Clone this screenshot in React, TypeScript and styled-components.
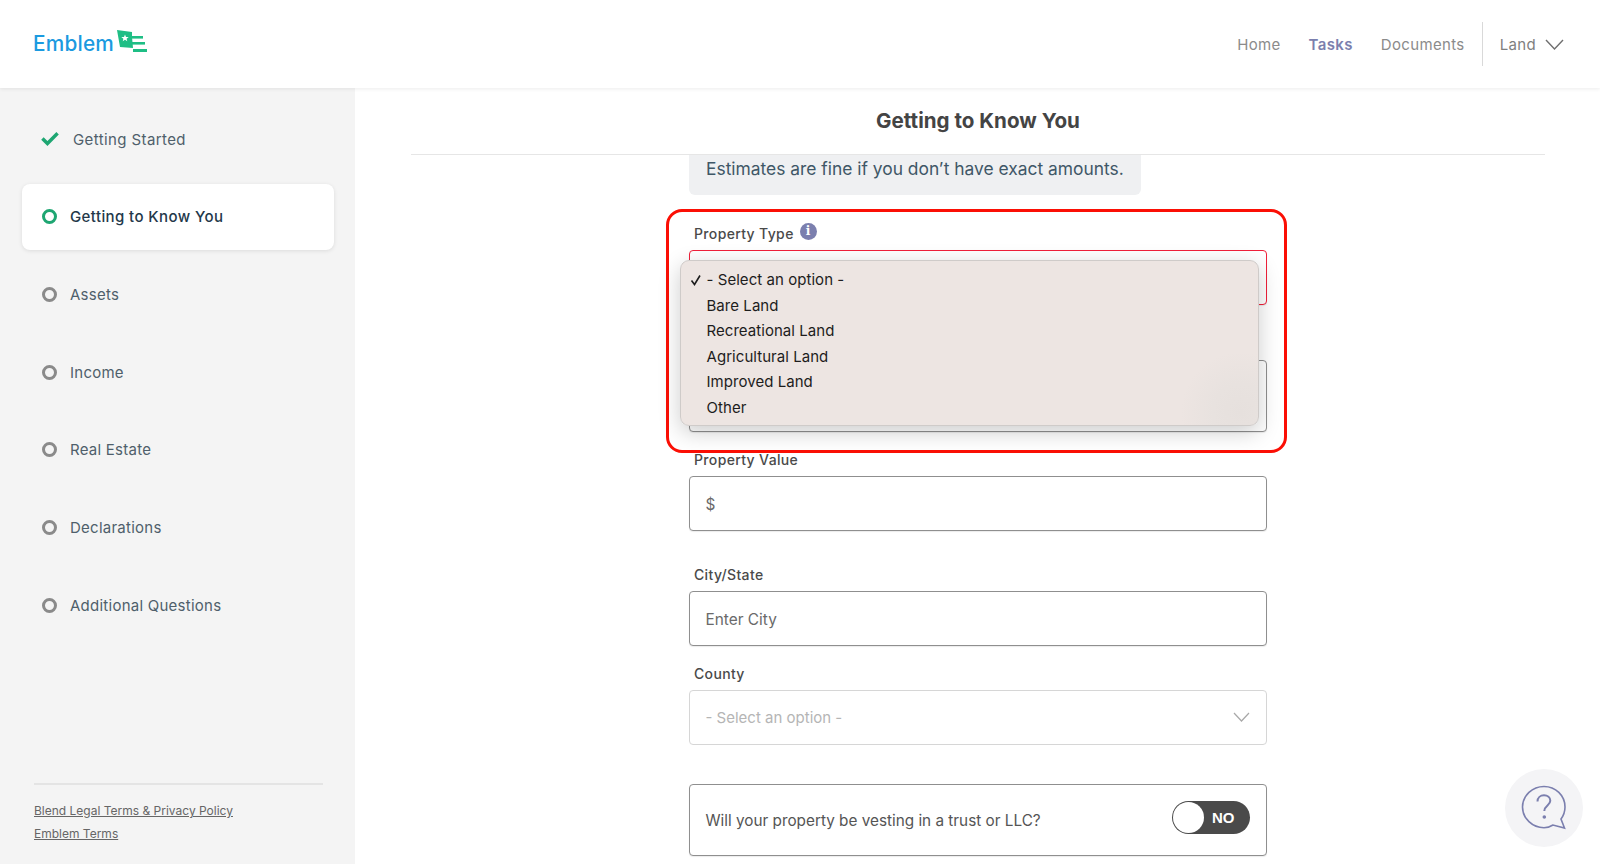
import React from "react";
import styled, { createGlobalStyle } from "styled-components";

const Global = createGlobalStyle`
  html, body { margin: 0; padding: 0; background: #fff; height: 100%; overflow: hidden; }
  body { font-family: Inter, "Liberation Sans", sans-serif; }
  * { box-sizing: border-box; }
`;

const Page = styled.div`
  width: 1600px;
  height: 864px;
  display: flex;
  flex-direction: column;
  overflow: hidden;
  position: relative;
`;
const Header = styled.header`
  height: 88px;
  flex: none;
  display: flex;
  align-items: center;
  justify-content: space-between;
  padding: 0 36px 0 33px;
  background: #fff;
  box-shadow: 0 1px 4px rgba(0, 0, 0, 0.08);
  position: relative;
  z-index: 2;
`;
const Logo = styled.div`
  display: flex;
  align-items: center;
  gap: 2px;
  margin-top: -6px;
`;
const LogoText = styled.span`
  font-size: 20.8px;
  font-weight: 500;
  color: #1b9ae0;
  letter-spacing: 0.2px;
  margin-top: 5px;
`;
const TopNav = styled.nav`
  display: flex;
  align-items: center;
`;
const TopLink = styled.span<{ $active?: boolean }>`
  font-size: 15px;
  letter-spacing: 0.35px;
  margin-left: 28px;
  font-weight: ${(p) => (p.$active ? 600 : 400)};
  color: ${(p) => (p.$active ? "#7b7fae" : "#8b8b8b")};
`;
const Divider = styled.div`
  width: 1px;
  height: 44px;
  background: #d9d9d9;
  margin: 0 17px 0 17px;
`;
const LandMenu = styled.div`
  display: flex;
  align-items: center;
  gap: 9px;
  font-size: 15px;
  letter-spacing: 0.35px;
  color: #7f7f7f;
`;
const Body = styled.div`
  flex: 1;
  display: flex;
  min-height: 0;
`;
const Sidebar = styled.aside`
  width: 355px;
  flex: none;
  background: #f4f4f4;
  padding: 18px 21px 0 22px;
  display: flex;
  flex-direction: column;
`;
const StepList = styled.div`
  display: flex;
  flex-direction: column;
  gap: 11.7px;
`;
const Step = styled.div<{ $active?: boolean }>`
  height: 66px;
  display: flex;
  align-items: center;
  padding-left: 20px;
  border-radius: 8px;
  font-size: 15px;
  letter-spacing: ${(p) => (p.$active ? "0.4px" : "0.25px")};
  font-weight: ${(p) => (p.$active ? 500 : 400)};
  color: ${(p) => (p.$active ? "#23384a" : "#4f5f6b")};
  background: ${(p) => (p.$active ? "#fff" : "transparent")};
  box-shadow: ${(p) => (p.$active ? "0 1px 4px rgba(0,0,0,0.1)" : "none")};
`;
const Ring = styled.span<{ $active?: boolean }>`
  width: 15px;
  height: 15px;
  border-radius: 50%;
  border: 3.5px solid ${(p) => (p.$active ? "#1ea672" : "#8a8a8a")};
  margin-right: 13px;
  flex: none;
`;
const CheckWrap = styled.span`
  display: flex;
  width: 18px;
  margin-right: 13px;
  margin-top: -2px;
  margin-left: -1px;
`;
const CheckedLabel = styled.span`
  margin-left: 1px;
  letter-spacing: 0.4px;
`;
const SideFooter = styled.div`
  margin: auto 11px 0 12px;
  border-top: 2px solid #e4e4e4;
  padding: 18px 0 23px;
  display: flex;
  flex-direction: column;
  align-items: flex-start;
  gap: 8px;
`;
const LegalLink = styled.a`
  font-size: 12px;
  line-height: 15px;
  color: #666;
  text-decoration: underline;
`;
const Main = styled.main`
  flex: 1;
  padding: 0 55px 0 56px;
  display: flex;
  flex-direction: column;
  align-items: center;
  min-width: 0;
`;
const TitleBar = styled.div`
  width: 100%;
  height: 67px;
  flex: none;
  border-bottom: 1px solid #e6e6e6;
  padding-bottom: 2px;
  display: flex;
  align-items: center;
  justify-content: center;
`;
const Title = styled.h1`
  margin: 0;
  font-size: 20.6px;
  font-weight: 700;
  color: #444;
`;
const Form = styled.div`
  width: 578px;
  flex: none;
`;
const Note = styled.div`
  width: 452px;
  height: 40px;
  background: #eff0f2;
  border-radius: 0 0 6px 6px;
  padding: 0 17px 13px;
  display: flex;
  align-items: center;
  font-size: 17.4px;
  white-space: nowrap;
  color: #3f5767;
`;
const HighlightArea = styled.div`
  position: relative;
  padding-top: 29px;
`;
const Highlight = styled.div`
  position: absolute;
  left: -23px;
  right: -20px;
  top: 14px;
  height: 244px;
  border: 3px solid #fb0f05;
  border-radius: 16px;
  pointer-events: none;
`;
const Label = styled.label`
  display: flex;
  align-items: center;
  gap: 6px;
  padding-left: 5px;
  height: 18px;
  margin-bottom: 8px;
  font-size: 14px;
  font-weight: 500;
  letter-spacing: 0.35px;
  color: #4a4a4a;
`;
const Box = styled.div<{ $h?: number; $error?: boolean; $muted?: boolean; $mb?: number }>`
  height: ${(p) => p.$h ?? 55}px;
  margin-bottom: ${(p) => p.$mb ?? 0}px;
  border: 1px solid ${(p) => (p.$error ? "#f0203a" : p.$muted ? "#d6d6d6" : "#8f8f8f")};
  border-radius: 4px;
  background: #fff;
  padding: ${(p) => (p.$muted ? "0 16px 1px 15.5px" : "1px 16px 0 15.5px")};
  display: flex;
  align-items: center;
  justify-content: space-between;
  font-size: ${(p) => (p.$muted ? 15 : 15.4)}px;
  color: ${(p) => (p.$muted ? "#b5b5b5" : "#6a6a6a")};
  box-shadow: ${(p) => (p.$muted ? "none" : "0 1px 1px rgba(0,0,0,0.08)")};
`;
const Menu = styled.div`
  position: absolute;
  left: -9px;
  top: 65px;
  width: 579px;
  height: 166px;
  padding: 6px 0 0 25.5px;
  border: 1px solid #cfcbc9;
  border-radius: 9px;
  background: radial-gradient(circle at 97% 92%, #e6e0dd 0, #e8e2df 28px, #ede5e2 60px);
  box-shadow: 0 6px 22px rgba(0, 0, 0, 0.2);
  z-index: 1;
`;
const Option = styled.div`
  position: relative;
  height: 25.5px;
  display: flex;
  align-items: center;
  font-size: 15px;
  letter-spacing: 0.05px;
  color: #1d1d1d;
`;
const Tick = styled.span`
  position: absolute;
  left: -17px;
  top: 7px;
  display: flex;
`;
const Spaced = styled.div<{ $top: number }>`
  margin-top: ${(p) => p.$top}px;
`;
const ToggleRow = styled(Box)`
  height: 72px;
  font-size: 15.3px;
  color: #555;
`;
const Toggle = styled.div`
  width: 78px;
  height: 33px;
  margin-top: -6px;
  border-radius: 17px;
  background: #4a4a4a;
  display: flex;
  align-items: center;
  padding: 1px;
  gap: 8px;
  font-family: "Liberation Sans", Arial, sans-serif;
  font-size: 15px;
  font-weight: 700;
  color: #fff;
`;
const Knob = styled.span`
  width: 31px;
  height: 31px;
  border-radius: 50%;
  background: #fff;
  flex: none;
`;
const HelpBubble = styled.div`
  position: absolute;
  left: 1505px;
  top: 769px;
  width: 78px;
  height: 78px;
  border-radius: 50%;
  background: #f4f4f6;
  display: flex;
  align-items: center;
  justify-content: center;
  z-index: 3;
`;
const InfoDot = styled.span`
  width: 17px;
  height: 17px;
  border-radius: 50%;
  background: #7b7fae;
  color: #fff;
  margin-top: -4px;
  font-family: "DejaVu Serif", serif;
  font-size: 12px;
  font-weight: 700;
  line-height: 17px;
  text-align: center;
`;

const Chevron = ({ w, h, color, sw }: { w: number; h: number; color: string; sw: number }) => (
  <svg width={w} height={h} viewBox={`0 0 ${w} ${h}`} fill="none">
    <path d={`M1 1 L${w / 2} ${h - 1} L${w - 1} 1`} stroke={color} strokeWidth={sw} />
  </svg>
);

const steps = ["Assets", "Income", "Real Estate", "Declarations", "Additional Questions"];
const options = ["- Select an option -", "Bare Land", "Recreational Land", "Agricultural Land", "Improved Land", "Other"];

export default function App() {
  return (
    <Page>
      <Global />
      <Header>
        <Logo>
          <LogoText>Emblem</LogoText>
          <svg width="32" height="24" viewBox="0 0 32 24">
            <path d="M1 1 L16 3 L16 8 L17 19 L4 18 Z" fill="#1fbe85" />
            <path d="M9 5.5 L10 8 L12.7 8 L10.6 9.7 L11.3 12.3 L9 10.8 L6.7 12.3 L7.4 9.7 L5.3 8 L8 8 Z" fill="#fff" />
            <rect x="16" y="7" width="11" height="2.6" fill="#1fbe85" />
            <rect x="16" y="13" width="13" height="2.6" fill="#1fbe85" />
            <rect x="17" y="20" width="14" height="3" fill="#1fbe85" />
          </svg>
        </Logo>
        <TopNav>
          <TopLink>Home</TopLink>
          <TopLink $active>Tasks</TopLink>
          <TopLink>Documents</TopLink>
          <Divider />
          <LandMenu>
            Land
            <Chevron w={19} h={11} color="#6f6f6f" sw={1.4} />
          </LandMenu>
        </TopNav>
      </Header>
      <Body>
        <Sidebar>
          <StepList>
            <Step>
              <CheckWrap>
                <svg width="19" height="15" viewBox="0 0 19 15" fill="none">
                  <path d="M1.5 7.5 L6.8 12.8 L17.5 2" stroke="#1ea672" strokeWidth="3.6" />
                </svg>
              </CheckWrap>
              <CheckedLabel>Getting Started</CheckedLabel>
            </Step>
            <Step $active>
              <Ring $active />
              Getting to Know You
            </Step>
            {steps.map((s) => (
              <Step key={s}>
                <Ring />
                {s}
              </Step>
            ))}
          </StepList>
          <SideFooter>
            <LegalLink>Blend Legal Terms &amp; Privacy Policy</LegalLink>
            <LegalLink>Emblem Terms</LegalLink>
          </SideFooter>
        </Sidebar>
        <Main>
          <TitleBar>
            <Title>Getting to Know You</Title>
          </TitleBar>
          <Form>
            <Note>Estimates are fine if you don’t have exact amounts.</Note>
            <HighlightArea>
              <Highlight />
              <Label>
                Property Type
                <InfoDot>i</InfoDot>
              </Label>
              <Box $error $mb={55} />
              <Box $h={72} />
              <Menu>
                {options.map((o, i) => (
                  <Option key={o}>
                    {i === 0 && (
                      <Tick>
                        <svg width="12" height="12" viewBox="0 0 12 12" fill="none">
                          <path d="M1.5 6.5 L4.5 10.5 L10 1.5" stroke="#1d1d1d" strokeWidth="1.6" />
                        </svg>
                      </Tick>
                    )}
                    {o}
                  </Option>
                ))}
              </Menu>
            </HighlightArea>
            <Spaced $top={18}>
              <Label>Property Value</Label>
              <Box>$</Box>
            </Spaced>
            <Spaced $top={34}>
              <Label>City/State</Label>
              <Box>Enter City</Box>
            </Spaced>
            <Spaced $top={18}>
              <Label>County</Label>
              <Box $muted>
                - Select an option -
                <Chevron w={17} h={10} color="#a8a8a8" sw={1.2} />
              </Box>
            </Spaced>
            <Spaced $top={39}>
              <ToggleRow>
                Will your property be vesting in a trust or LLC?
                <Toggle>
                  <Knob />
                  NO
                </Toggle>
              </ToggleRow>
            </Spaced>
          </Form>
        </Main>
      </Body>
      <HelpBubble>
        <svg width="48" height="48" viewBox="0 0 48 48" fill="none">
          <path
            d="M24 2.5 C35.5 2.5 45 11.5 45 23 C45 27.5 43.6 31.5 41 35 L44.5 44 L33 41 C30.2 42.8 27 43.7 24 43.7 C12.5 43.7 2.5 34.5 2.5 23 C2.5 11.5 12.5 2.5 24 2.5 Z"
            stroke="#7b7fae"
            strokeWidth="1.6"
          />
          <path
            d="M17.5 17.5 C17.5 13.5 20.5 11.3 24 11.3 C27.5 11.3 30.3 13.6 30.3 16.8 C30.3 21.5 24.3 21.5 24.3 27"
            stroke="#7b7fae"
            strokeWidth="2"
          />
          <circle cx="24.3" cy="33" r="1.8" fill="#7b7fae" />
        </svg>
      </HelpBubble>
    </Page>
  );
}
